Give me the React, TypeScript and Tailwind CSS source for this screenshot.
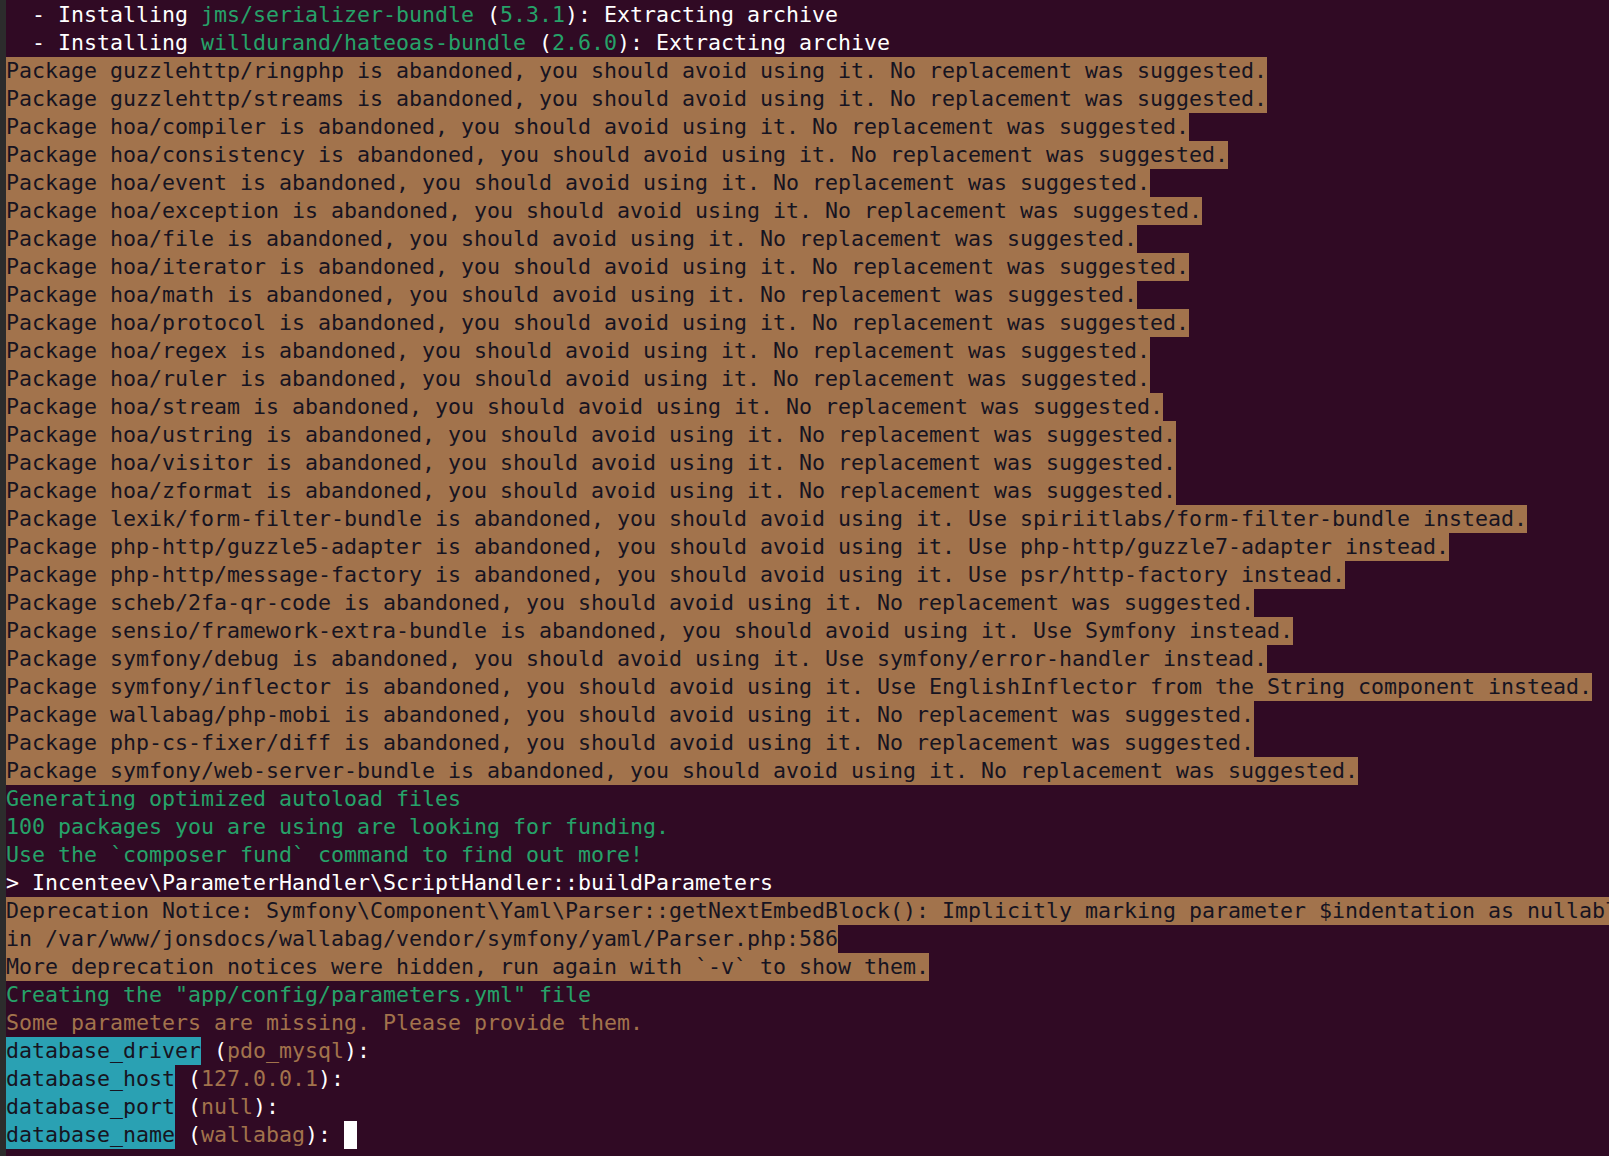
import React from "react";

type Seg = { t: string; c?: "w" | "g" | "y" | "d"; bg?: "y" | "c" };

const W: Seg["c"] = "w";

const fgClass: Record<string, string> = {
  w: "text-[#ffffff]",
  g: "text-[#26a269]",
  y: "text-[#a2734c]",
  d: "text-[#171421]",
};
const bgClass: Record<string, string> = {
  y: "bg-[#a2734c]",
  c: "bg-[#2aa1b3]",
};

const pkgs: string[] = [
  "Package guzzlehttp/ringphp is abandoned, you should avoid using it. No replacement was suggested.",
  "Package guzzlehttp/streams is abandoned, you should avoid using it. No replacement was suggested.",
  "Package hoa/compiler is abandoned, you should avoid using it. No replacement was suggested.",
  "Package hoa/consistency is abandoned, you should avoid using it. No replacement was suggested.",
  "Package hoa/event is abandoned, you should avoid using it. No replacement was suggested.",
  "Package hoa/exception is abandoned, you should avoid using it. No replacement was suggested.",
  "Package hoa/file is abandoned, you should avoid using it. No replacement was suggested.",
  "Package hoa/iterator is abandoned, you should avoid using it. No replacement was suggested.",
  "Package hoa/math is abandoned, you should avoid using it. No replacement was suggested.",
  "Package hoa/protocol is abandoned, you should avoid using it. No replacement was suggested.",
  "Package hoa/regex is abandoned, you should avoid using it. No replacement was suggested.",
  "Package hoa/ruler is abandoned, you should avoid using it. No replacement was suggested.",
  "Package hoa/stream is abandoned, you should avoid using it. No replacement was suggested.",
  "Package hoa/ustring is abandoned, you should avoid using it. No replacement was suggested.",
  "Package hoa/visitor is abandoned, you should avoid using it. No replacement was suggested.",
  "Package hoa/zformat is abandoned, you should avoid using it. No replacement was suggested.",
  "Package lexik/form-filter-bundle is abandoned, you should avoid using it. Use spiriitlabs/form-filter-bundle instead.",
  "Package php-http/guzzle5-adapter is abandoned, you should avoid using it. Use php-http/guzzle7-adapter instead.",
  "Package php-http/message-factory is abandoned, you should avoid using it. Use psr/http-factory instead.",
  "Package scheb/2fa-qr-code is abandoned, you should avoid using it. No replacement was suggested.",
  "Package sensio/framework-extra-bundle is abandoned, you should avoid using it. Use Symfony instead.",
  "Package symfony/debug is abandoned, you should avoid using it. Use symfony/error-handler instead.",
  "Package symfony/inflector is abandoned, you should avoid using it. Use EnglishInflector from the String component instead.",
  "Package wallabag/php-mobi is abandoned, you should avoid using it. No replacement was suggested.",
  "Package php-cs-fixer/diff is abandoned, you should avoid using it. No replacement was suggested.",
  "Package symfony/web-server-bundle is abandoned, you should avoid using it. No replacement was suggested.",
];

const lines: Seg[][] = [
  [
    { t: "  - Installing ", c: W },
    { t: "jms/serializer-bundle", c: "g" },
    { t: " (", c: W },
    { t: "5.3.1", c: "g" },
    { t: "): Extracting archive", c: W },
  ],
  [
    { t: "  - Installing ", c: W },
    { t: "willdurand/hateoas-bundle", c: "g" },
    { t: " (", c: W },
    { t: "2.6.0", c: "g" },
    { t: "): Extracting archive", c: W },
  ],
  ...pkgs.map((p) => [{ t: p, c: "d", bg: "y" } as Seg]),
  [{ t: "Generating optimized autoload files", c: "g" }],
  [{ t: "100 packages you are using are looking for funding.", c: "g" }],
  [{ t: "Use the `composer fund` command to find out more!", c: "g" }],
  [{ t: "> Incenteev\\ParameterHandler\\ScriptHandler::buildParameters", c: W }],
  [
    {
      t: "Deprecation Notice: Symfony\\Component\\Yaml\\Parser::getNextEmbedBlock(): Implicitly marking parameter $indentation as nullable is deprecated, the explicit nullable type must be used instead",
      c: "d",
      bg: "y",
    },
  ],
  [{ t: "in /var/www/jonsdocs/wallabag/vendor/symfony/yaml/Parser.php:586", c: "d", bg: "y" }],
  [{ t: "More deprecation notices were hidden, run again with `-v` to show them.", c: "d", bg: "y" }],
  [{ t: 'Creating the "app/config/parameters.yml" file', c: "g" }],
  [{ t: "Some parameters are missing. Please provide them.", c: "y" }],
  [
    { t: "database_driver", c: "d", bg: "c" },
    { t: " (", c: W },
    { t: "pdo_mysql", c: "y" },
    { t: "): ", c: W },
  ],
  [
    { t: "database_host", c: "d", bg: "c" },
    { t: " (", c: W },
    { t: "127.0.0.1", c: "y" },
    { t: "): ", c: W },
  ],
  [
    { t: "database_port", c: "d", bg: "c" },
    { t: " (", c: W },
    { t: "null", c: "y" },
    { t: "): ", c: W },
  ],
  [
    { t: "database_name", c: "d", bg: "c" },
    { t: " (", c: W },
    { t: "wallabag", c: "y" },
    { t: "): ", c: W },
  ],
];

export default function App() {
  return (
    <div className="flex w-[1609px] h-[1156px] overflow-hidden bg-[#300a24]">
      <div className="w-[6px] shrink-0 bg-[#2c2c2c]" />
      <div
        className="flex-1 min-w-0 overflow-hidden pt-[1px] text-[21.6px] leading-[28px]"
        style={{ fontFamily: '"DejaVu Sans Mono", monospace', fontKerning: "none", fontVariantLigatures: "none" }}
      >
        {lines.map((segs, i) => (
          <div key={i} className="h-[28px] whitespace-pre flex">
            {segs.map((s, j) => (
              <span
                key={j}
                className={`${fgClass[s.c || "w"]} ${s.bg ? bgClass[s.bg] : ""} h-[28px] shrink-0`}
              >
                {s.t}
              </span>
            ))}
            {i === lines.length - 1 && <span className="inline-block w-[13px] h-[28px] bg-white shrink-0" />}
          </div>
        ))}
      </div>
    </div>
  );
}
